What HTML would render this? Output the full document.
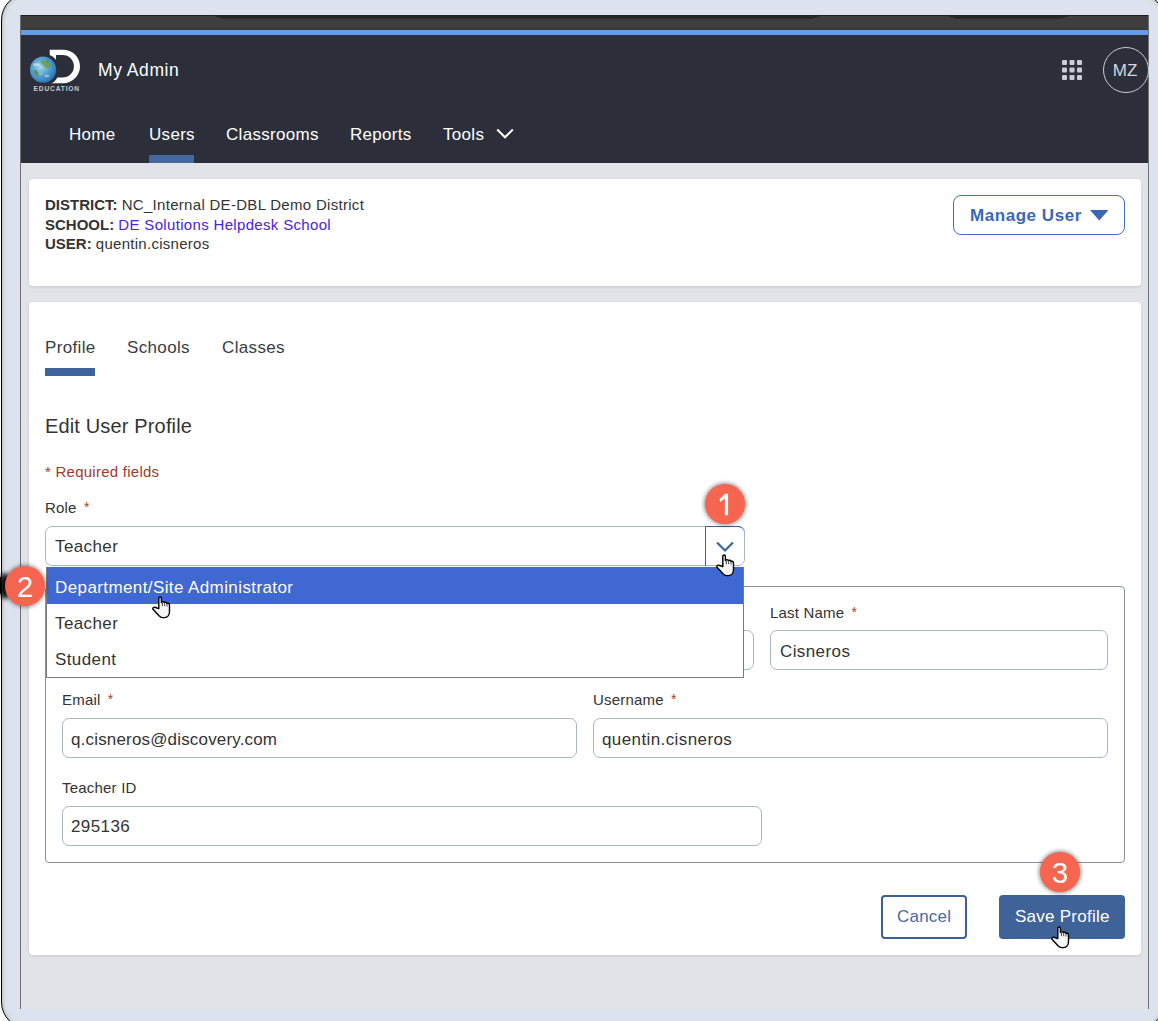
<!DOCTYPE html>
<html><head><meta charset="utf-8">
<style>
*{box-sizing:border-box;margin:0;padding:0}
html,body{width:1158px;height:1021px;overflow:hidden;background:#fff;font-family:"Liberation Sans",sans-serif;position:relative}
.a{position:absolute;white-space:nowrap}
#frame{left:1px;top:-7px;width:1164px;height:1036px;border:1px solid #000;border-radius:27px;background:#dde3ee;box-shadow:inset 0 0 0 1px #c4c3c5, inset 0 0 0 2px #c6dcdc, inset 0 0 0 3px #d8d5ea, inset 0 0 0 4px #dfdeee, inset 0 0 0 6px #dae4e2}
#screen{left:20px;top:15px;width:1129px;height:994px;background:#e2e3e8;border-left:1px solid #6d6f73;border-right:1px solid #6d6f73}
.nav{color:#fff;font-size:17px;top:125px;line-height:20px;letter-spacing:.3px}
.card{background:#fff;border-radius:4px;box-shadow:0 1px 3px rgba(0,0,0,.12)}
.t{color:#333}
.inp{border:1px solid #a9b8c0;border-radius:7px;background:#fff}
.lbl{font-size:15px;color:#333;line-height:18px;letter-spacing:.2px;margin-top:1px}
.val{font-size:17px;color:#333;line-height:20px;letter-spacing:.4px;margin-top:1px}
.star{color:#b03c28;font-size:14px;letter-spacing:0;position:relative;top:-1px;margin-left:-1px}
.badge{width:40px;height:40px;border-radius:50%;background:#f5654f;color:#fff;font-size:29px;text-align:center;line-height:42px;box-shadow:0 0 4px 1px rgba(0,0,0,.45)}
</style></head><body>
<div id="frame" class="a"></div>
<div id="screen" class="a"></div>
<div class="a" style="left:21px;top:15px;width:1127px;height:15px;background:#3e3e3e;border-top:1px solid #1f1f1f;border-bottom:1px solid #3a3733"></div>
<svg class="a" style="left:0;top:0" width="1158" height="30" viewBox="0 0 1158 30"><path d="M213 15.5 H822 L812.5 18.8 H223 Z M947 15.5 H1070 L1061 18.8 H956 Z" fill="#272727"/></svg>
<div class="a" style="left:21px;top:30px;width:1127px;height:5px;background:#629cea"></div>
<div class="a" style="left:21px;top:35px;width:1127px;height:128px;background:#2c2f3a"></div>

<!-- logo -->
<svg class="a" style="left:20px;top:40px" width="70" height="60" viewBox="20 40 70 60">
<defs>
<radialGradient id="gl" cx="0.4" cy="0.4" r="0.65">
<stop offset="0" stop-color="#a9d6ea"/><stop offset="0.45" stop-color="#5aa6d4"/><stop offset="0.85" stop-color="#3580bd"/><stop offset="1" stop-color="#2a6aa6"/>
</radialGradient>
</defs>
<path d="M49.7 49.7 H63 A17 16.75 0 0 1 63 83.2 H50 Z M56 54.9 V77.6 H62.6 A11.3 11.35 0 0 0 62.6 54.9 Z" fill="#fff" fill-rule="evenodd"/>
<circle cx="43.1" cy="69.7" r="16.2" fill="#2c2f3a"/>
<circle cx="43.1" cy="69.7" r="13.1" fill="url(#gl)"/>
<path d="M41 61 q3 -2 6 0 q2 2 4 3 q0 3 -3 4 q-2 1 -3 -1 q-2 -1 -3 -3 q-2 -1 -1 -3z" fill="#6e9d48" opacity=".8"/>
<path d="M46 60 q2 0 3 2 l-2 1z" fill="#5e8f3c" opacity=".8"/>
<path d="M34 70 q3 0 4 2 q2 2 1 4 q-2 0 -4 -2 q-2 -2 -1 -4z" fill="#5b8a3c" opacity=".8"/>
<path d="M44 67 q3 0 4 2 q-1 2 -3 1z" fill="#8fb866" opacity=".6"/>
<ellipse cx="36.5" cy="64.5" rx="3.5" ry="1.6" fill="#eaf6fa" opacity=".5"/>
<ellipse cx="47" cy="76" rx="2.5" ry="1.3" fill="#eaf6fa" opacity=".45"/>
<ellipse cx="40" cy="74" rx="2" ry="1" fill="#eaf6fa" opacity=".35"/>
<text x="56.8" y="91" font-family="Liberation Sans" font-size="6.6" font-weight="bold" fill="#c9cbd0" text-anchor="middle" letter-spacing="0.85">EDUCATION</text>
</svg>
<!-- header content -->
<div class="a" style="left:98px;top:60px;color:#fff;font-size:17.5px;line-height:20px;letter-spacing:.55px">My Admin</div>
<div class="a nav" style="left:69px">Home</div>
<div class="a nav" style="left:149px">Users</div>
<div class="a nav" style="left:226px">Classrooms</div>
<div class="a nav" style="left:350px">Reports</div>
<div class="a nav" style="left:443px">Tools</div>
<svg class="a" style="left:495px;top:126px" width="20" height="14" viewBox="0 0 20 14"><path d="M2.2 3.5 L10 11.3 L17.8 3.5" fill="none" stroke="#fff" stroke-width="2"/></svg>
<div class="a" style="left:149px;top:155px;width:45px;height:8px;background:#44679e"></div>
<!-- grid icon -->
<svg class="a" style="left:1062px;top:60px" width="21" height="21" viewBox="0 0 21 21" fill="#c9ccd5">
<rect x="0" y="0" width="5" height="5" rx="1"/><rect x="7.5" y="0" width="5" height="5" rx="1"/><rect x="15" y="0" width="5" height="5" rx="1"/>
<rect x="0" y="7.5" width="5" height="5" rx="1"/><rect x="7.5" y="7.5" width="5" height="5" rx="1"/><rect x="15" y="7.5" width="5" height="5" rx="1"/>
<rect x="0" y="15" width="5" height="5" rx="1"/><rect x="7.5" y="15" width="5" height="5" rx="1"/><rect x="15" y="15" width="5" height="5" rx="1"/>
</svg>
<div class="a" style="left:1103px;top:47px;width:46px;height:46px;border:1.5px solid #c9ccd3;border-radius:50%"></div>
<div class="a" style="left:1102px;top:61px;width:46px;text-align:center;color:#d3d6dd;font-size:17px;line-height:20px">MZ</div>

<!-- card 1 -->
<div class="a card" style="left:29px;top:179px;width:1112px;height:107px"></div>
<div class="a t" style="left:45px;top:195px;font-size:15px;line-height:20px"><b>DISTRICT:</b> <span style="letter-spacing:.3px">NC_Internal DE-DBL Demo District</span></div>
<div class="a t" style="left:45px;top:215px;font-size:15px;line-height:20px"><b>SCHOOL:</b> <span style="color:#4a22e0;letter-spacing:.33px">DE Solutions Helpdesk School</span></div>
<div class="a t" style="left:45px;top:234px;font-size:15px;line-height:20px"><b>USER:</b> <span style="letter-spacing:.27px">quentin.cisneros</span></div>
<div class="a" style="left:953px;top:195px;width:172px;height:40px;border:1px solid #4470c0;border-radius:8px"></div>
<div class="a" style="left:970px;top:206px;color:#3a66b8;font-size:17px;font-weight:bold;line-height:20px;letter-spacing:.55px">Manage User</div>
<svg class="a" style="left:1090px;top:210px" width="19" height="11" viewBox="0 0 19 11"><path d="M0 0 H18.5 L9.25 10.5 Z" fill="#3a66b8"/></svg>

<!-- card 2 -->
<div class="a card" style="left:29px;top:302px;width:1112px;height:653px"></div>
<div class="a t" style="left:45px;top:338px;font-size:17px;line-height:20px;letter-spacing:.35px;color:#383c44">Profile</div>
<div class="a t" style="left:127px;top:338px;font-size:17px;line-height:20px;letter-spacing:.35px;color:#383c44">Schools</div>
<div class="a t" style="left:222px;top:338px;font-size:17px;line-height:20px;letter-spacing:.35px;color:#383c44">Classes</div>
<div class="a" style="left:45px;top:368px;width:50px;height:8px;background:#3e639d"></div>
<div class="a t" style="left:45px;top:414px;font-size:20px;line-height:24px;letter-spacing:.15px">Edit User Profile</div>
<div class="a" style="left:45px;top:463px;font-size:15px;line-height:18px;color:#9e3a2c;letter-spacing:.25px">* Required fields</div>
<div class="a lbl" style="left:45px;top:498px">Role <span class="star">&nbsp;*</span></div>

<!-- form box -->
<div class="a" style="left:45px;top:586px;width:1080px;height:277px;border:1px solid #8a8fa0;border-radius:4px"></div>
<div class="a lbl" style="left:770px;top:603px">Last Name <span class="star">&nbsp;*</span></div>
<div class="a inp" style="left:62px;top:630px;width:692px;height:40px"></div>
<div class="a inp" style="left:770px;top:630px;width:338px;height:40px"></div>
<div class="a val" style="left:780px;top:641px">Cisneros</div>
<div class="a lbl" style="left:62px;top:690px">Email <span class="star">&nbsp;*</span></div>
<div class="a lbl" style="left:593px;top:690px">Username <span class="star">&nbsp;*</span></div>
<div class="a inp" style="left:62px;top:718px;width:515px;height:40px"></div>
<div class="a inp" style="left:593px;top:718px;width:515px;height:40px"></div>
<div class="a val" style="left:71px;top:729px;letter-spacing:.17px">q.cisneros@discovery.com</div>
<div class="a val" style="left:602px;top:729px">quentin.cisneros</div>
<div class="a lbl" style="left:62px;top:778px">Teacher ID</div>
<div class="a inp" style="left:62px;top:806px;width:700px;height:40px"></div>
<div class="a val" style="left:71px;top:816px">295136</div>

<!-- role select -->
<div class="a inp" style="left:45px;top:526px;width:700px;height:40px"></div>
<div class="a val" style="left:55px;top:536px">Teacher</div>
<div class="a" style="left:705px;top:526px;width:40px;height:40px;border-left:1px solid #3d5f9b;border-top:1px solid #3d5f9b;border-top-right-radius:7px"></div>
<svg class="a" style="left:715px;top:540px" width="20" height="14" viewBox="0 0 20 14"><path d="M2 2.5 L10 10.5 L18 2.5" fill="none" stroke="#3d64a3" stroke-width="2.2"/></svg>

<!-- dropdown list -->
<div class="a" style="left:46px;top:567px;width:698px;height:111px;background:#fff;border:1px solid #7b7b7b"></div>
<div class="a" style="left:47px;top:567px;width:696px;height:37px;background:#3f68d2"></div>
<div class="a val" style="left:55px;top:577px;color:#fff">Department/Site Administrator</div>
<div class="a val" style="left:55px;top:613px">Teacher</div>
<div class="a val" style="left:55px;top:649px">Student</div>

<!-- buttons -->
<div class="a" style="left:881px;top:895px;width:86px;height:44px;border:2px solid #3d609b;border-radius:4px"></div>
<div class="a" style="left:897px;top:907px;color:#4a6aa0;font-size:17px;line-height:20px;letter-spacing:.2px">Cancel</div>
<div class="a" style="left:999px;top:895px;width:126px;height:44px;background:#3f6399;border-radius:4px"></div>
<div class="a" style="left:1015px;top:907px;color:#fff;font-size:17px;line-height:20px;letter-spacing:.25px">Save Profile</div>

<!-- badges -->
<div class="a badge" style="left:705px;top:484px"></div>
<svg class="a" style="left:705px;top:484px" width="40" height="40" viewBox="705 484 40 40"><path d="M724.9,515.2 V498.6 L720.2,502 L719.6,498.9 L725.3,493.8 H728.1 V515.2 Z" fill="#fff"/></svg>
<div class="a" style="left:-1px;top:573px;width:11px;height:26px;background:#000;border-radius:50%;filter:blur(2px);opacity:.9"></div>
<div class="a" style="left:0;top:577px;width:2px;height:17px;background:#000"></div>
<div class="a badge" style="left:5px;top:566px">2</div>
<div class="a badge" style="left:1040px;top:852px">3</div>
<!-- cursors -->
<svg class="a" style="left:716px;top:554px" width="19" height="23" viewBox="0 0 19 23"><path d="M6.8,12.6 L6.8,2 C6.8,0.6 9.4,0.6 9.4,2 L9.4,6.5 C9.8,5.3 12.2,5.3 12.4,6.8 C12.8,6 14.8,6 15,7.6 C15.4,6.8 17.5,7 17.5,9 L17.5,15.5 C17.5,19 15.5,21.6 12.5,21.6 L10.5,21.6 C9,21.6 8,20.8 7,19.8 L1.2,13.5 C0.2,12.4 1.5,10.8 3,11.2 C4.5,11.6 6,12.3 6.8,12.6 Z" fill="#f6f6f6" stroke="#000" stroke-width="1.4" stroke-linejoin="round"/><path d="M10.4 6.5 V10.2 M12.7 7.4 V10.2 M15 8.2 V10.6" stroke="#444" stroke-width="1"/></svg>
<svg class="a" style="left:152px;top:596px" width="19" height="23" viewBox="0 0 19 23"><path d="M6.8,12.6 L6.8,2 C6.8,0.6 9.4,0.6 9.4,2 L9.4,6.5 C9.8,5.3 12.2,5.3 12.4,6.8 C12.8,6 14.8,6 15,7.6 C15.4,6.8 17.5,7 17.5,9 L17.5,15.5 C17.5,19 15.5,21.6 12.5,21.6 L10.5,21.6 C9,21.6 8,20.8 7,19.8 L1.2,13.5 C0.2,12.4 1.5,10.8 3,11.2 C4.5,11.6 6,12.3 6.8,12.6 Z" fill="#f6f6f6" stroke="#000" stroke-width="1.4" stroke-linejoin="round"/><path d="M10.4 6.5 V10.2 M12.7 7.4 V10.2 M15 8.2 V10.6" stroke="#444" stroke-width="1"/></svg>
<svg class="a" style="left:1051px;top:926px" width="19" height="23" viewBox="0 0 19 23"><path d="M6.8,12.6 L6.8,2 C6.8,0.6 9.4,0.6 9.4,2 L9.4,6.5 C9.8,5.3 12.2,5.3 12.4,6.8 C12.8,6 14.8,6 15,7.6 C15.4,6.8 17.5,7 17.5,9 L17.5,15.5 C17.5,19 15.5,21.6 12.5,21.6 L10.5,21.6 C9,21.6 8,20.8 7,19.8 L1.2,13.5 C0.2,12.4 1.5,10.8 3,11.2 C4.5,11.6 6,12.3 6.8,12.6 Z" fill="#f6f6f6" stroke="#000" stroke-width="1.4" stroke-linejoin="round"/><path d="M10.4 6.5 V10.2 M12.7 7.4 V10.2 M15 8.2 V10.6" stroke="#444" stroke-width="1"/></svg>
</body></html>
